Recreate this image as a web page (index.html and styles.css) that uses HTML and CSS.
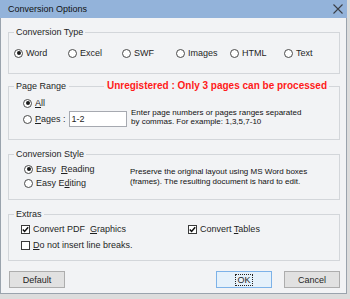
FILE: index.html
```html
<!DOCTYPE html>
<html>
<head>
<meta charset="utf-8">
<link rel="stylesheet" href="styles.css">
</head>
<body>
<div class="screen">
  <div class="window">
    <div class="titlebar">
      <span class="title">Conversion Options</span>
      <svg class="close" width="10" height="10" viewBox="0 0 10 10"><path d="M0.5 0.5 L9.5 9.5 M9.5 0.5 L0.5 9.5" stroke="#3a3f47" stroke-width="1.1" fill="none"/></svg>
    </div>
    <div class="content">
      <fieldset class="group g-type">
        <legend>Conversion Type</legend>
        <div class="type-row">
          <div class="opt"><span class="radio on"></span>Word</div>
          <div class="opt"><span class="radio"></span>Excel</div>
          <div class="opt"><span class="radio"></span>SWF</div>
          <div class="opt"><span class="radio"></span>Images</div>
          <div class="opt"><span class="radio"></span>HTML</div>
          <div class="opt"><span class="radio"></span>Text</div>
        </div>
      </fieldset>

      <fieldset class="group g-range">
        <legend class="legend-wide"><span>Page Range</span><span class="legend-line"></span><span class="warn">Unregistered : Only 3 pages can be processed</span></legend>
        <div class="split">
          <div class="range-opts">
            <div class="opt row-all"><span class="radio on"></span><span><u>A</u>ll</span></div>
            <div class="opt row-pages"><span class="radio"></span><span><u>P</u>ages :</span><span class="input">1-2</span></div>
          </div>
          <div class="help">Enter page numbers or pages ranges separated<br>by commas. For example: 1,3,5,7-10</div>
        </div>
      </fieldset>

      <fieldset class="group g-style">
        <legend>Conversion Style</legend>
        <div class="split">
          <div class="style-opts">
            <div class="opt"><span class="radio on"></span><span>Easy&nbsp; <u>R</u>eading</span></div>
            <div class="opt"><span class="radio"></span><span>Easy E<u>d</u>iting</span></div>
          </div>
          <div class="desc">Preserve the original layout using MS Word boxes<br>(frames). The resulting document is hard to edit.</div>
        </div>
      </fieldset>

      <fieldset class="group g-extras">
        <legend>Extras</legend>
        <div class="extras">
          <div class="opt"><span class="check"><svg width="9" height="9" viewBox="0 0 9 9"><path d="M1.8 4.4 L3.6 6.4 L7.2 2.2" stroke="#111" stroke-width="1.5" fill="none"/></svg></span><span>Convert PDF&nbsp; <u>G</u>raphics</span></div>
          <div class="opt"><span class="check"><svg width="9" height="9" viewBox="0 0 9 9"><path d="M1.8 4.4 L3.6 6.4 L7.2 2.2" stroke="#111" stroke-width="1.5" fill="none"/></svg></span><span>Convert <u>T</u>ables</span></div>
          <div class="opt"><span class="check"></span><span><u>D</u>o not insert line breaks.</span></div>
        </div>
      </fieldset>

      <div class="buttons">
        <div class="btn btn-default">Default</div>
        <div class="btn-spacer"></div>
        <div class="btn btn-ok"><span class="focus">OK</span></div>
        <div class="btn">Cancel</div>
      </div>
    </div>
  </div>
</div>
</body>
</html>
```
FILE: styles.css
```css
* { box-sizing: border-box; }
html, body { margin: 0; padding: 0; }
body {
  font-family: "Liberation Sans", Arial, sans-serif;
  font-size: 9px;
  color: #1f1f1f;
  background: #dcdcdc;
}
.screen {
  width: 350px;
  height: 299px;
  background: #dcdcdc;
  overflow: hidden;
}
.window {
  width: 347px;
  height: 294px;
  border: 1px solid #9aa3ad;
  border-top: none;
  background: #f2f3f5;
  display: flex;
  flex-direction: column;
}
.titlebar {
  height: 18px;
  margin: 0 -1px;
  background: #93b3da;
  display: flex;
  align-items: center;
  padding: 0 4px 0 8px;
}
.title {
  flex: 1;
  font-size: 9px;
  color: #111;
}
.close { display: block; margin-top: -1px; }
.content {
  flex: 1;
  display: flex;
  flex-direction: column;
  padding: 8px 6px 5px 7px;
}
.group {
  margin: 0;
  border: 1px solid #d3d6da;
  padding: 0 5px;
  min-width: 0;
}
.group legend {
  padding: 0 2px;
  line-height: 12px;
  height: 12px;
  color: #1f1f1f;
}
.g-type { padding-top: 9px; padding-bottom: 14px; }
.g-range { margin-top: 6px; padding-top: 5px; padding-bottom: 12px; }
.g-style { margin-top: 8px; padding-top: 3px; padding-bottom: 10px; }
.g-extras { margin-top: 8px; padding-top: 3px; padding-bottom: 9px; }

.legend-wide {
  display: flex;
  align-items: center;
  width: 315px;
}
.legend-line {
  flex: 1;
  height: 1px;
  background: #d3d6da;
  margin: 0 3px;
}
.warn {
  color: #ff1a1a;
  font-weight: bold;
  font-size: 10px;
}

.opt {
  display: flex;
  align-items: center;
  gap: 3px;
  height: 12px;
  white-space: nowrap;
}
.radio {
  width: 9px;
  height: 9px;
  border: 1px solid #4a4a4a;
  border-radius: 50%;
  background: #fff;
  display: flex;
  align-items: center;
  justify-content: center;
  flex: none;
}
.radio.on::after {
  content: "";
  width: 4px;
  height: 4px;
  border-radius: 50%;
  background: #1a1a1a;
}
.check {
  width: 9px;
  height: 9px;
  border: 1px solid #3a3a3a;
  background: #fff;
  flex: none;
  display: flex;
  align-items: center;
  justify-content: center;
}
.check svg { display: block; flex: none; }
u { text-decoration: underline; text-underline-offset: 1px; }

.type-row {
  display: grid;
  grid-template-columns: repeat(6, 54px);
}

.split { display: flex; }
.range-opts {
  width: 117px;
  padding-left: 9px;
  display: flex;
  flex-direction: column;
  gap: 2px;
}
.row-pages { height: 16px; }
.input {
  width: 58px;
  height: 16px;
  border: 1px solid #a6a9b0;
  background: #fff;
  padding-left: 2px;
  line-height: 14px;
  margin-left: 0;
}
.help {
  align-self: flex-end;
  margin-bottom: 1px;
  font-size: 8px;
  line-height: 9px;
  color: #111;
}
.style-opts {
  width: 116px;
  padding-left: 10px;
  display: flex;
  flex-direction: column;
  gap: 2px;
}
.desc {
  margin-top: 4px;
  font-size: 8px;
  line-height: 10px;
  color: #111;
}
.extras {
  display: grid;
  grid-template-columns: 167px 1fr;
  row-gap: 4px;
  padding-left: 7px;
}

.buttons {
  margin-top: 10px;
  display: flex;
  gap: 12px;
}
.btn-spacer { flex: 1; }
.btn {
  width: 56px;
  height: 17px;
  border: 1px solid #adadad;
  background: #e1e1e1;
  display: flex;
  align-items: center;
  justify-content: center;
  color: #1f1f1f;
}
.btn-default { margin-left: 1px; }
.btn-ok {
  border-color: #7db2e8;
  background: #e5f1fb;
}
.focus {
  border: 1px dotted #222;
  padding: 0 1px;
  line-height: 10px;
}
```
